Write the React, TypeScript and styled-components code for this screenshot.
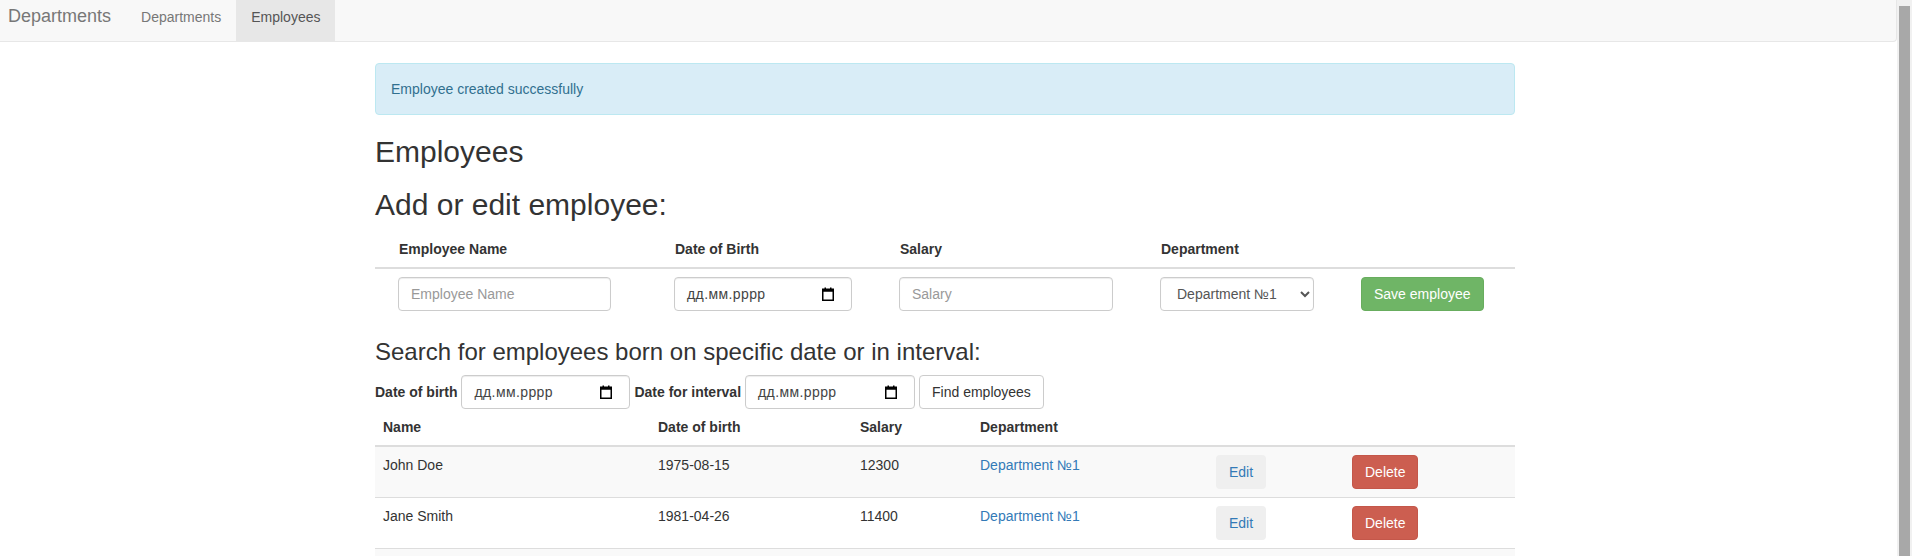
import React from "react";
import styled, { createGlobalStyle } from "styled-components";

const GlobalStyle = createGlobalStyle`
  body {
    margin: 0;
    font-family: "Liberation Sans", Arial, Helvetica, sans-serif;
    font-size: 14px;
    line-height: 1.42857143;
    color: #333;
    background: #fff;
  }
  * {
    box-sizing: border-box;
  }
`;

const Screen = styled.div`
  display: flex;
  align-items: flex-start;
`;

const Page = styled.div`
  flex: 1;
  min-width: 0;
`;

const ScrollTrack = styled.div`
  position: sticky;
  top: 0;
  flex: none;
  width: 15px;
  height: 100vh;
  padding: 6px 2px 0;
  background: #f1f1f1;
`;

const ScrollThumb = styled.div`
  height: 100%;
  background: #a8a8a8;
`;

const Navbar = styled.nav`
  display: flex;
  height: 42px;
  background: #f8f8f8;
  border-right: 1px solid #e7e7e7;
  border-bottom: 1px solid #e7e7e7;
  border-radius: 0 0 4px 0;
  margin-bottom: 21px;
`;

const Brand = styled.a`
  display: block;
  padding: 6px 15px 0 8px;
  font-size: 18px;
  line-height: 20px;
  color: #777;
  text-decoration: none;
`;

const NavList = styled.ul`
  display: flex;
  margin: 0;
  padding: 0;
  list-style: none;
`;

const NavLink = styled.a<{ $active?: boolean }>`
  display: block;
  height: 100%;
  padding: 7px 15px 0;
  line-height: 20px;
  color: ${(p) => (p.$active ? "#555" : "#777")};
  background: ${(p) => (p.$active ? "#e7e7e7" : "transparent")};
  text-decoration: none;
`;

const Container = styled.main`
  width: 1140px;
  margin-left: calc(50% - 573.5px);
`;

const Alert = styled.div`
  padding: 15px;
  margin-bottom: 20px;
  border: 1px solid #bce8f1;
  border-radius: 4px;
  background: #d9edf7;
  color: #31708f;
`;

const PageTitle = styled.h2`
  margin: 20px 0 10px;
  font-size: 30px;
  font-weight: 500;
  line-height: 1.1;
`;

const SectionTitle = styled.h3`
  margin: 20px 0 10px;
  font-size: 24px;
  font-weight: 500;
  line-height: 1.1;
`;

const Table = styled.table<{ $gap?: number }>`
  width: 100%;
  table-layout: fixed;
  border-collapse: collapse;
  border-spacing: 0;
  margin-bottom: ${(p) => p.$gap ?? 0}px;
`;

const HeadCell = styled.th<{ $pad: number }>`
  padding: 8px 8px 8px ${(p) => p.$pad}px;
  text-align: left;
  font-weight: 700;
  line-height: 20px;
  vertical-align: bottom;
  border-bottom: 2px solid #ddd;
`;

const FormCell = styled.td`
  padding: 8px 8px 8px 23px;
  vertical-align: top;
`;

const Row = styled.tr<{ $striped?: boolean }>`
  background: ${(p) => (p.$striped ? "#f9f9f9" : "transparent")};
`;

const Cell = styled.td`
  padding: 8px;
  line-height: 20px;
  vertical-align: top;
  border-top: 1px solid #ddd;
`;

const controlBase = `
  display: block;
  height: 34px;
  padding: 6px 12px;
  font-family: "Liberation Sans", Arial, Helvetica, sans-serif;
  font-size: 14px;
  line-height: 20px;
  color: #555;
  background: #fff;
  border: 1px solid #ccc;
  border-radius: 4px;
  box-shadow: inset 0 1px 1px rgba(0, 0, 0, 0.075);
`;

const TextInput = styled.input<{ $w: number }>`
  ${controlBase}
  width: ${(p) => p.$w}px;
  &::placeholder {
    color: #999;
  }
`;

const Select = styled.select<{ $w: number }>`
  ${controlBase}
  width: ${(p) => p.$w}px;
`;

const DateBox = styled.div<{ $w: number }>`
  ${controlBase}
  display: flex;
  align-items: center;
  justify-content: space-between;
  width: ${(p) => p.$w}px;
  padding-right: 17px;
  color: #444;
  flex: none;
`;

const DateText = styled.span`
  letter-spacing: 0.4px;
`;

const Btn = styled.button<{ $variant: "success" | "danger" | "default" | "plain" }>`
  display: inline-block;
  height: 34px;
  padding: 6px 12px;
  font-family: "Liberation Sans", Arial, Helvetica, sans-serif;
  font-size: 14px;
  line-height: 20px;
  white-space: nowrap;
  border-radius: 4px;
  border: 1px solid
    ${(p) =>
      p.$variant === "success"
        ? "#68ad5e"
        : p.$variant === "danger"
        ? "#c4574a"
        : p.$variant === "default"
        ? "#ccc"
        : "transparent"};
  background: ${(p) =>
    p.$variant === "success"
      ? "#6fb566"
      : p.$variant === "danger"
      ? "#cc5e50"
      : p.$variant === "default"
      ? "#fff"
      : "#efefef"};
  color: ${(p) =>
    p.$variant === "success" || p.$variant === "danger"
      ? "#fff"
      : p.$variant === "default"
      ? "#333"
      : "#337ab7"};
  flex: none;
`;

const SearchForm = styled.form`
  display: flex;
  align-items: center;
  gap: 4px;
  height: 34px;
`;

const Label = styled.label`
  font-weight: 700;
  flex: none;
`;

const Link = styled.a`
  color: #337ab7;
  text-decoration: none;
`;

const CalendarIcon = () => (
  <svg width="12" height="14" viewBox="0 0 12 14" fill="none" aria-hidden="true">
    <rect x="0.75" y="2.25" width="10.5" height="11" stroke="#000" strokeWidth="1.5" />
    <rect x="0.75" y="2.25" width="10.5" height="2.5" fill="#000" />
    <rect x="2.5" y="0.5" width="1.5" height="2" fill="#000" />
    <rect x="8" y="0.5" width="1.5" height="2" fill="#000" />
  </svg>
);

const DateField = ({ w }: { w: number }) => (
  <DateBox $w={w}>
    <DateText>дд.мм.рррр</DateText>
    <CalendarIcon />
  </DateBox>
);

const employees = [
  { name: "John Doe", dob: "1975-08-15", salary: 12300, dept: "Department №1" },
  { name: "Jane Smith", dob: "1981-04-26", salary: 11400, dept: "Department №1" },
  { name: "Peter Brown", dob: "1988-11-03", salary: 10900, dept: "Department №2" },
];

const formCols = [276, 225, 261, 201, 177];
const listCols = [275, 202, 120, 236, 136, 171];

export default function App() {
  return (
    <>
      <GlobalStyle />
      <Screen>
        <Page>
          <Navbar>
            <Brand href="#">Departments</Brand>
            <NavList>
              <li>
                <NavLink href="#">Departments</NavLink>
              </li>
              <li>
                <NavLink href="#" $active>
                  Employees
                </NavLink>
              </li>
            </NavList>
          </Navbar>
          <Container>
            <Alert>Employee created successfully</Alert>
            <PageTitle>Employees</PageTitle>
            <PageTitle>Add or edit employee:</PageTitle>
            <Table $gap={20}>
              <colgroup>
                {formCols.map((w, i) => (
                  <col key={i} style={{ width: w }} />
                ))}
              </colgroup>
              <thead>
                <tr>
                  <HeadCell $pad={24}>Employee Name</HeadCell>
                  <HeadCell $pad={24}>Date of Birth</HeadCell>
                  <HeadCell $pad={24}>Salary</HeadCell>
                  <HeadCell $pad={24}>Department</HeadCell>
                  <HeadCell $pad={24} />
                </tr>
              </thead>
              <tbody>
                <tr>
                  <FormCell>
                    <TextInput $w={213} placeholder="Employee Name" />
                  </FormCell>
                  <FormCell>
                    <DateField w={178} />
                  </FormCell>
                  <FormCell>
                    <TextInput $w={214} placeholder="Salary" />
                  </FormCell>
                  <FormCell>
                    <Select $w={154} defaultValue="1">
                      <option value="1">Department №1</option>
                      <option value="2">Department №2</option>
                    </Select>
                  </FormCell>
                  <FormCell>
                    <Btn type="button" $variant="success">
                      Save employee
                    </Btn>
                  </FormCell>
                </tr>
              </tbody>
            </Table>
            <SectionTitle>Search for employees born on specific date or in interval:</SectionTitle>
            <SearchForm>
              <Label>Date of birth</Label>
              <DateField w={169} />
              <Label>Date for interval</Label>
              <DateField w={170} />
              <Btn type="button" $variant="default">
                Find employees
              </Btn>
            </SearchForm>
            <Table>
              <colgroup>
                {listCols.map((w, i) => (
                  <col key={i} style={{ width: w }} />
                ))}
              </colgroup>
              <thead>
                <tr>
                  <HeadCell $pad={8}>Name</HeadCell>
                  <HeadCell $pad={8}>Date of birth</HeadCell>
                  <HeadCell $pad={8}>Salary</HeadCell>
                  <HeadCell $pad={8}>Department</HeadCell>
                  <HeadCell $pad={8} />
                  <HeadCell $pad={8} />
                </tr>
              </thead>
              <tbody>
                {employees.map((e, i) => (
                  <Row key={e.name} $striped={i % 2 === 0}>
                    <Cell>{e.name}</Cell>
                    <Cell>{e.dob}</Cell>
                    <Cell>{e.salary}</Cell>
                    <Cell>
                      <Link href="#">{e.dept}</Link>
                    </Cell>
                    <Cell>
                      <Btn type="button" $variant="plain">
                        Edit
                      </Btn>
                    </Cell>
                    <Cell>
                      <Btn type="button" $variant="danger">
                        Delete
                      </Btn>
                    </Cell>
                  </Row>
                ))}
              </tbody>
            </Table>
          </Container>
        </Page>
        <ScrollTrack aria-hidden="true">
          <ScrollThumb />
        </ScrollTrack>
      </Screen>
    </>
  );
}
